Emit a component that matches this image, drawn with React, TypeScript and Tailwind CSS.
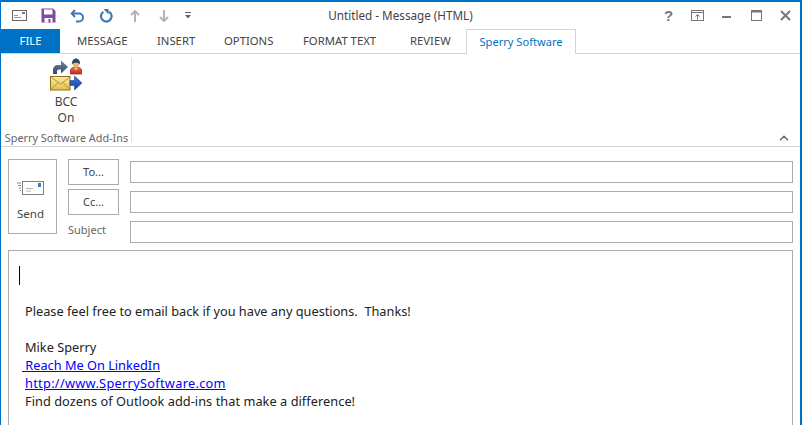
import { ChevronUp } from 'lucide-react';

const font = "font-['Noto_Sans',_'Open_Sans',_sans-serif]";

function QuickIcons() {
  return (
    <div className="flex items-center h-[29px] pl-[11px]">
      {/* new message */}
      <svg width="15" height="11" viewBox="0 0 15 11" className="mr-[14px]">
        <rect x=".5" y=".5" width="14" height="10" fill="none" stroke="#666" />
        <rect x="10" y="2" width="3" height="2" fill="#777" />
        <path d="M2 5.500h4M2 7.500h7" stroke="#999" />
      </svg>
      {/* save */}
      <svg width="15" height="15" viewBox="0 0 15 15" className="mr-[14px]">
        <path d="M.5.500h11.500l2.500 2.500v11.500H.500z" fill="#7E4C9E" />
        <rect x="3" y="1.500" width="8.500" height="5" fill="#fff" />
        <rect x="3.500" y="10" width="8" height="4.500" fill="#fff" />
        <rect x="7.500" y="11" width="2" height="3.500" fill="#7E4C9E" />
      </svg>
      {/* undo */}
      <svg width="15" height="14" viewBox="0 0 15 14" className="mr-[14px]">
        <path d="M5 1 1.800 4.500 5 8" fill="none" stroke="#3D78B4" strokeWidth="2" />
        <path d="M2.500 4.500h6.500a4 4 0 0 1 4 4v0a4 4 0 0 1-4 4H6" fill="none" stroke="#3D78B4" strokeWidth="2" />
      </svg>
      {/* repeat */}
      <svg width="14" height="14" viewBox="0 0 14 14" className="mr-[17px]">
        <path d="M4.400 2.800A5.300 5.300 0 1 0 9.800 2.600" fill="none" stroke="#3D78B4" strokeWidth="2.200" />
        <path d="M4.500 0h5v5.500z" fill="#3D78B4" />
      </svg>
      {/* up */}
      <svg width="10" height="12" viewBox="0 0 10 12" className="mr-[19px]">
        <path d="M5 1v11M1 5l4-4 4 4" fill="none" stroke="#B3B3B3" strokeWidth="2" />
      </svg>
      {/* down */}
      <svg width="10" height="12" viewBox="0 0 10 12" className="mr-[16px]">
        <path d="M5 11V0M1 7l4 4 4-4" fill="none" stroke="#B3B3B3" strokeWidth="2" />
      </svg>
      {/* customize */}
      <svg width="6" height="7" viewBox="0 0 6 7">
        <path d="M0 .5h6" stroke="#666" />
        <path d="M0 3h6L3 6.500z" fill="#666" />
      </svg>
    </div>
  );
}

function WindowIcons() {
  return (
    <div className="flex items-center justify-end h-[29px] pr-[9px]">
      <span className="w-[8px] mr-[19px] text-[15px] leading-none font-bold text-[#777] font-['Liberation_Sans',_sans-serif]">?</span>
      <svg width="13" height="11" viewBox="0 0 13 11" className="mr-[18px]">
        <rect x=".5" y=".5" width="12" height="10" fill="none" stroke="#777" />
        <path d="M1 2.500h11" stroke="#777" />
        <path d="M6.500 9.500V5M4.500 6.500l2-2 2 2" fill="none" stroke="#777" />
      </svg>
      <div className="w-[9px] h-[2px] bg-[#777] mr-[20px] mt-[3px]" />
      <svg width="11" height="11" viewBox="0 0 11 11" className="mr-[18px]">
        <rect x=".5" y=".5" width="10" height="10" fill="none" stroke="#777" />
        <rect x="0" y="0" width="11" height="2.500" fill="#777" />
      </svg>
      <svg width="11" height="11" viewBox="0 0 11 11">
        <path d="M1 1l9 9M10 1l-9 9" stroke="#777" strokeWidth="2" />
      </svg>
    </div>
  );
}

function BccIcon() {
  return (
    <svg width="33" height="33" viewBox="0 0 33 33">
      <defs>
        <linearGradient id="env" x1="0" y1="0" x2="0" y2="1">
          <stop offset="0" stopColor="#FBE9A0" />
          <stop offset="1" stopColor="#E6BE4A" />
        </linearGradient>
        <linearGradient id="fwd" x1="0" y1="0" x2="0" y2="1">
          <stop offset="0" stopColor="#3F7BE0" />
          <stop offset="1" stopColor="#123F9C" />
        </linearGradient>
        <linearGradient id="back" x1="0" y1="0" x2="0" y2="1">
          <stop offset="0" stopColor="#6F86A6" />
          <stop offset="1" stopColor="#34496A" />
        </linearGradient>
        <linearGradient id="body" x1="0" y1="0" x2="0" y2="1">
          <stop offset="0" stopColor="#F06A50" />
          <stop offset="1" stopColor="#C92A1C" />
        </linearGradient>
      </defs>
      {/* curved arrow */}
      <path d="M3 16v-4c0-3 2-5 5-5h3V2.500L18 9l-7 6.500V11.500H9c-1.500 0-2 1-2 2V16z" fill="url(#back)" />
      {/* person */}
      <path d="M20.500 16v-4c0-1.500 2-2.500 3-2.500h5c1 0 3 1 3 2.500v4z" fill="url(#body)" stroke="#7E1D12" strokeWidth=".7" />
      <path d="M24 9.500h4l-2 3z" fill="#F6D96A" />
      <circle cx="26" cy="6" r="3.300" fill="#E8B67A" />
      <path d="M22 6.500C21.500 2.500 24 .5 26 .5s4.500 2 4 6C29 4 23 4 22 6.500z" fill="#2C4A58" />
      {/* envelope */}
      <rect x=".5" y="18.500" width="19.500" height="13.500" fill="url(#env)" stroke="#8F7216" />
      <path d="M1 19l9.500 7L20 19M1 31.500l7-7M20 31.500l-7-7" fill="none" stroke="#A08525" strokeWidth=".8" />
      {/* forward arrow */}
      <path d="M20 22.500h4.500V18l7.500 7-7.500 7v-4.500H20z" fill="url(#fwd)" stroke="#10357F" strokeWidth=".5" />
    </svg>
  );
}

function SendIcon() {
  return (
    <svg width="28" height="15" viewBox="0 0 28 15">
      <rect x="6.500" y=".5" width="21" height="13" fill="#fff" stroke="#7F7F7F" />
      <rect x="22" y="2" width="3" height="4" fill="#3F7CB5" />
      <path d="M10 7.500h7M10 10h5" stroke="#B0B0B0" />
      <path d="M1 2h4M2 4.500h3M3 7h2M4 9.500h1" stroke="#8A8A8A" />
    </svg>
  );
}

function AddressButton({ label }: { label: string }) {
  return (
    <button className="w-[51px] h-[26px] border border-[#ababab] bg-white text-[11px] text-[#444] flex items-center justify-center">
      {label}
    </button>
  );
}

function Field() {
  return <div className="h-[22px] border border-[#ababab] bg-white" />;
}

export default function App() {
  const tabs = [
    { label: 'MESSAGE', w: 'w-[80px]' },
    { label: 'INSERT', w: 'w-[67px]' },
    { label: 'OPTIONS', w: 'w-[79px]' },
    { label: 'FORMAT TEXT', w: 'w-[107px]' },
    { label: 'REVIEW', w: 'w-[56px]' },
  ];

  return (
    <div className={`${font} w-[802px] h-[425px] overflow-hidden bg-white border-l-[1px] border-r-[2px] border-t-[2px] border-[#0072C6] text-[#444]`}>
      {/* title bar */}
      <div className="grid grid-cols-[1fr_auto_1fr] h-[27px] -mt-[1px]">
        <QuickIcons />
        <div className="h-[29px] flex items-center text-[11.700px] text-[#444]">Untitled - Message (HTML)</div>
        <WindowIcons />
      </div>

      {/* ribbon tabs */}
      <div className="flex h-[25px] mt-[1px] border-b border-[#d4d4d4] text-[11.300px] leading-none">
        <div className="w-[59px] h-[24px] bg-[#0072C6] text-white flex items-center justify-center mr-[17px]">FILE</div>
        {tabs.map(t => (
          <div key={t.label} className={`${t.w} flex items-center h-[24px] whitespace-nowrap`}>
            {t.label}
          </div>
        ))}
        <div className="h-[25px] w-[110px] border border-b-0 border-[#d4d4d4] bg-white text-[#0072C6] text-[11.100px] flex items-center justify-center">
          Sperry Software
        </div>
      </div>

      {/* ribbon body */}
      <div className="h-[93px] flex border-b border-[#d4d4d4] relative">
        <div className="w-[131px] mt-[4px] h-[84px] border-r border-[#e1e1e1] flex flex-col items-center text-[#444]">
          <div className="ml-[1px]"><BccIcon /></div>
          <div className="text-[12px] leading-[16px] mt-[3px] text-center">BCC<br />On</div>
          <div className="text-[10.850px] leading-[14px] mt-[5px] ml-[1px] text-[#666] whitespace-nowrap">Sperry Software Add-Ins</div>
        </div>
        <ChevronUp size={14} strokeWidth={2.5} className="absolute right-[9px] bottom-[1px] text-[#666]" />
      </div>

      {/* addressing */}
      <div className="flex pl-[7px] pr-[7px] pt-[12px]">
        <div className="w-[49px] h-[75px] border border-[#ababab] flex flex-col items-center">
          <div className="mt-[21px] mr-[6px]"><SendIcon /></div>
          <div className="text-[11.500px] mt-[10px] mr-[4px] leading-[16px]">Send</div>
        </div>
        <div className="flex flex-col w-[51px] ml-[11px] gap-[4px]">
          <AddressButton label="To..." />
          <AddressButton label="Cc..." />
          <div className="text-[11px] leading-[16px] mt-[3px] text-[#666]">Subject</div>
        </div>
        <div className="flex-1 ml-[11px] flex flex-col gap-[8px] pt-[2px]">
          <Field />
          <Field />
          <Field />
        </div>
      </div>

      {/* message body */}
      <div className="mx-[7px] mt-[7px] h-[200px] border border-[#ababab] pl-[16px] pt-[15px] text-[12.750px] leading-[18px] text-[#222]">
        <div className="w-[1px] h-[19px] bg-black -ml-[6px]" />
        <div className="mt-[17px] whitespace-pre">Please feel free to email back if you have any questions.  Thanks!</div>
        <div className="mt-[18px]">Mike Sperry</div>
        <div className="text-[#0000ff]"><span className="underline whitespace-pre -ml-[3px]"> Reach Me On LinkedIn</span></div>
        <div className="text-[#0000ff] underline tracking-[0.3px]">http://www.SperrySoftware.com</div>
        <div className="tracking-[0.05px]">Find dozens of Outlook add-ins that make a difference!</div>
      </div>
    </div>
  );
}
